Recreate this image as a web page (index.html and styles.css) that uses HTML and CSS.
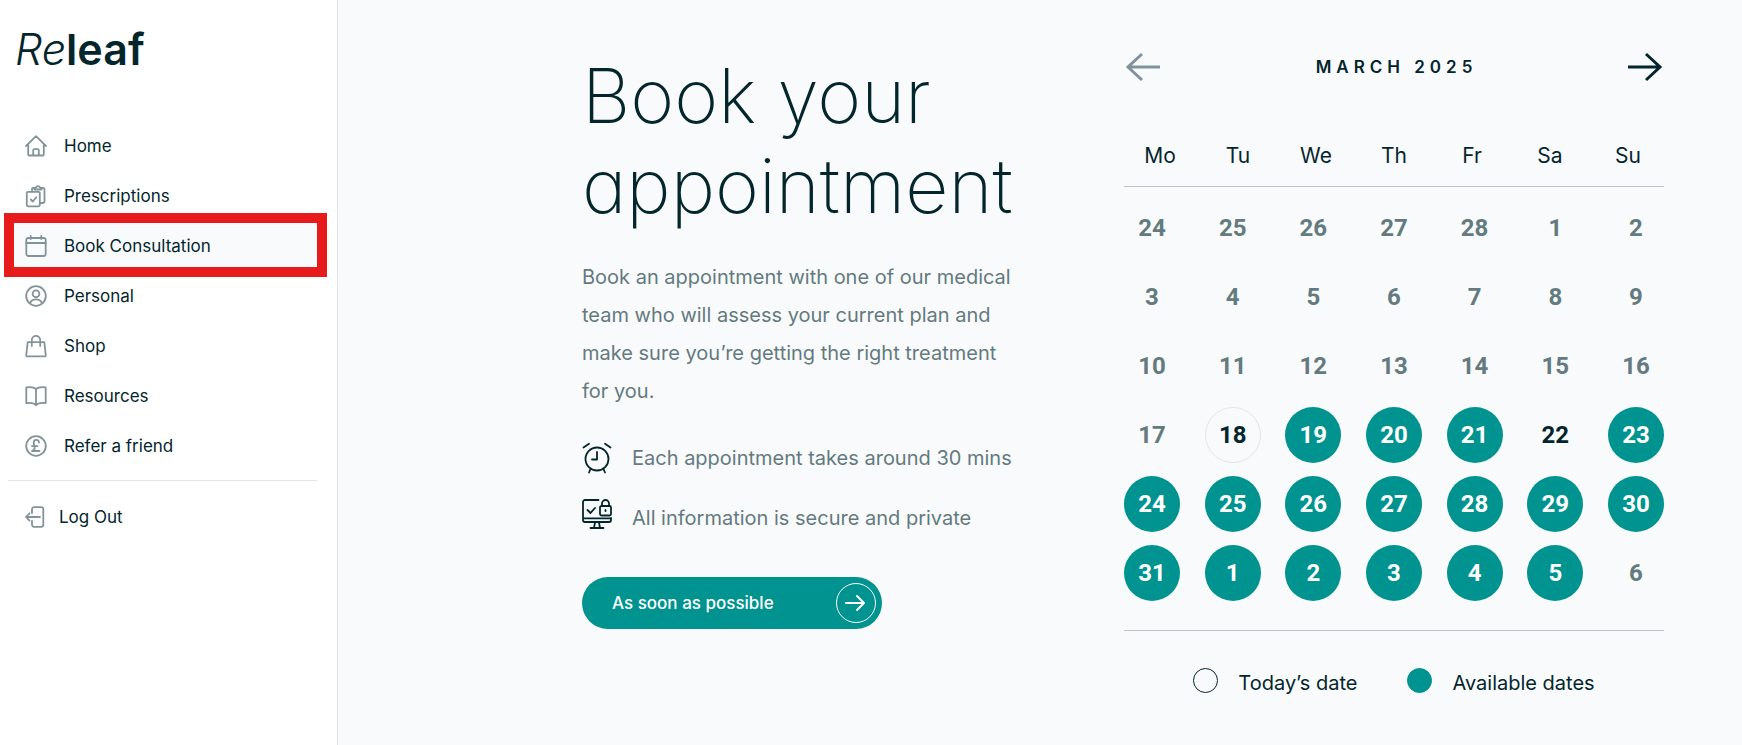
FILE: index.html
```html
<!DOCTYPE html>
<html lang="en">
<head>
<meta charset="UTF-8" />
<meta name="viewport" content="width=device-width, initial-scale=1" />
<title>Releaf - Book your appointment</title>
<link rel="stylesheet" href="styles.css">
</head>
<body>

<div class="layout">

  <!-- Sidebar -->
  <aside class="sidebar">
    <a href="#" class="logo"><em>Re</em><strong>leaf</strong></a>

    <nav class="menu" aria-label="Main">
      <a href="#" class="menu-item">
        <svg class="icon" viewBox="0 0 22 22"><path d="M1 11 11 1.2 21 11M3.2 9.5v10a1 1 0 0 0 1 1h13.6a1 1 0 0 0 1-1v-10M8.2 20.5v-5.300a1 1 0 0 1 1-1h3.600a1 1 0 0 1 1 1v5.300"/></svg>
        Home
      </a>
      <a href="#" class="menu-item">
        <svg class="icon" viewBox="0 0 22 22"><rect x="1.800" y="6.800" width="13" height="14.500" rx="1.200"/><path d="M5.800 14.500l2 2 3.500-4.300M7 6.500V4a1 1 0 0 1 1-1h1.500M16.500 3H18a1.500 1.500 0 0 1 1.500 1.500V16a2 2 0 0 1-2 2H15M9.500 4.500c0-2 1-1.700 1.700-2.200.6-1.700 3-1.700 3.600 0 .7.500 1.700.2 1.700 2.200z"/></svg>
        Prescriptions
      </a>
      <a href="#" class="menu-item active" aria-current="page">
        <svg class="icon" viewBox="0 0 22 22"><rect x="1.300" y="3" width="19.400" height="18" rx="2.200"/><path d="M1.300 8h19.400M5.700 .8V4M16.300 .8V4"/></svg>
        Book Consultation
      </a>
      <a href="#" class="menu-item">
        <svg class="icon" viewBox="0 0 22 22"><circle cx="11" cy="11" r="9.800"/><circle cx="11" cy="8.800" r="3.400"/><path d="M4.800 18.300c1.300-2.700 3.500-3.900 6.200-3.900s4.900 1.200 6.200 3.900"/></svg>
        Personal
      </a>
      <a href="#" class="menu-item">
        <svg class="icon" viewBox="0 0 22 22"><path d="M2.700 7.200h16.600l1.500 13.300a.8.8 0 0 1-.8.800H2a.8.8 0 0 1-.8-.8zM6.800 11V5a4.200 4.200 0 0 1 8.400 0v6"/></svg>
        Shop
      </a>
      <a href="#" class="menu-item">
        <svg class="icon" viewBox="0 0 22 22"><path d="M11 4.200C9 2 5 1.800 1.300 2.300v15.900c3.700-.5 7.700-.3 9.700 2 2-2.300 6-2.500 9.700-2V2.300C17 1.800 13 2 11 4.200zV20"/></svg>
        Resources
      </a>
      <a href="#" class="menu-item">
        <svg class="icon" viewBox="0 0 22 22"><circle cx="11" cy="11" r="9.800"/><path d="M14 7.500c0-3.500-5.300-3.500-5.300.2 0 2 1 3 1 5 0 1.700-1.200 2.600-2.700 3.300h7.500M7 11.200h5.500"/></svg>
        Refer a friend
      </a>
    </nav>

    <a href="#" class="menu-item logout">
      <svg class="icon" viewBox="0 0 22 22"><path d="M7 7V3.200a2 2 0 0 1 2-2h7.300a2 2 0 0 1 2 2v15.600a2 2 0 0 1-2 2H9a2 2 0 0 1-2-2V15M15 11H1M4.500 7.300 1 11l3.500 3.700"/></svg>
      Log Out
    </a>
  </aside>

  <!-- Booking -->
  <main class="booking">

    <section class="intro">
      <h1>Book your appointment</h1>
      <p>Book an appointment with one of our medical team who will assess your current plan and make sure you’re getting the right treatment for you.</p>

      <ul class="features">
        <li>
          <svg class="feature-icon" viewBox="0 0 30 30"><circle cx="15" cy="16" r="11.500"/><path d="M15 9v7.500h-5M1.500 4.500 7 .8M28.500 4.500 23 .8M8.500 26 7 29.500M21.500 26l1.500 3.500"/></svg>
          Each appointment takes around 30 mins
        </li>
        <li>
          <svg class="feature-icon raised" viewBox="0 0 30 30"><path d="M16.500 1H3a2 2 0 0 0-2 2v18a2 2 0 0 0 2 2h24a2 2 0 0 0 2-2v-2M1 19.300h28M13 23.500 12 29M17 23.500l1 5.500M8.500 29h13M5.500 11l3 3L13 9"/><rect x="18" y="7" width="11" height="9.500" rx="1.500"/><path d="M20 7V4.500a3.500 3.500 0 0 1 7 0V7M23.500 11v1"/></svg>
          All information is secure and private
        </li>
      </ul>

      <button type="button" class="asap-btn">
        As soon as possible
        <span class="asap-arrow">
          <svg viewBox="0 0 20 16"><path d="M0 8h18M11 1l7 7-7 7"/></svg>
        </span>
      </button>
    </section>

    <!-- Calendar -->
    <section class="calendar" aria-label="Calendar">
      <div class="calendar-header">
        <button type="button" class="month-btn" aria-label="Previous month" disabled>
          <svg viewBox="0 0 40 30"><path d="M36 15H4M18 2 4 15l14 13"/></svg>
        </button>
        <h2>March 2025</h2>
        <button type="button" class="month-btn" aria-label="Next month">
          <svg viewBox="0 0 40 30"><path d="M4 15h32M22 2l14 13-14 13"/></svg>
        </button>
      </div>

      <div class="weekdays">
        <span>Mo</span><span>Tu</span><span>We</span><span>Th</span><span>Fr</span><span>Sa</span><span>Su</span>
      </div>

      <div class="days" id="days"></div>

      <div class="legend">
        <span class="legend-item"><i class="dot"></i>Today’s date</span>
        <span class="legend-item"><i class="dot dot-available"></i>Available dates</span>
      </div>
    </section>

  </main>
</div>

<script>
  (() => {
    const days = document.getElementById('days');
    const today = new Date(2025, 2, 18);
    const lastBookable = new Date(2025, 3, 5);
    const fullyBooked = [22];

    // Six weeks, from Monday 24 February
    for (let i = 0; i < 42; i++) {
      const date = new Date(2025, 1, 24 + i);
      const day = document.createElement('button');
      day.type = 'button';
      day.className = 'day';
      day.textContent = date.getDate();

      if (date.getTime() === today.getTime()) {
        day.classList.add('today');
      } else if (date < today || date > lastBookable) {
        day.disabled = true;
      } else if (!(date.getMonth() === 2 && fullyBooked.includes(date.getDate()))) {
        day.classList.add('available');
      }
      days.appendChild(day);
    }
  })();
</script>

</body>
</html>
```

FILE: styles.css
```css
/* Reset & base */
*, *::before, *::after {
  box-sizing: border-box;
}
body {
  margin: 0;
  font-family: Inter, 'Open Sans', sans-serif;
  background: #f9fafc;
  color: #03262c;
}
h1, h2, p, ul {
  margin: 0;
  padding: 0;
}
button {
  font-family: inherit;
  color: inherit;
  background: none;
  border: none;
  padding: 0;
  cursor: pointer;
}
svg {
  display: block;
  flex-shrink: 0;
  fill: none;
  stroke: currentColor;
  stroke-linecap: round;
  stroke-linejoin: round;
  overflow: visible;
}

.layout {
  display: flex;
  min-height: 100vh;
}

/* Sidebar */
.sidebar {
  flex: 0 0 338px;
  padding: 24px 20px 24px 8px;
  background: #fff;
  border-right: 1px solid #e3e7ea;
}

.logo {
  display: block;
  margin-bottom: 47px;
  padding-left: 7px;
  font-size: 43px;
  line-height: 50px;
  color: inherit;
  text-decoration: none;
}
.logo em {
  font-weight: 300;
}
.logo strong {
  font-weight: 600;
}

.menu {
  padding-bottom: 9px;
  border-bottom: 1px solid #e3e5e7;
}

.menu-item {
  position: relative;
  display: flex;
  align-items: center;
  gap: 17px;
  height: 50px;
  padding-left: 17px;
  font-size: 17px;
  color: inherit;
  text-decoration: none;
}

.icon {
  width: 22px;
  height: 22px;
  color: #82949a;
  stroke-width: 1.8;
}

.menu-item.active {
  background: #f9fafc;
}
/* Highlight frame around the current item */
.menu-item.active::after {
  content: '';
  position: absolute;
  inset: -8px -10px -6px -4px;
  border: 10px solid #e71b1b;
  z-index: 1;
}

.logout {
  gap: 12px;
  margin-top: 11px;
}

/* Booking */
.booking {
  flex: 1;
  display: flex;
  justify-content: space-between;
  align-items: flex-start;
  gap: 40px;
  padding: 50px 78px 40px 244px;
}

.intro {
  flex: 0 1 440px;
}

.intro h1 {
  margin: 1px 0 27px;
  font-size: 75px;
  font-weight: 200;
  font-feature-settings: 'cv11';
  line-height: 90px;
}

.intro p {
  margin-bottom: 29px;
  font-size: 20px;
  line-height: 38px;
  color: #637a7e;
}

.features {
  list-style: none;
  display: flex;
  flex-direction: column;
  gap: 22px;
  margin-bottom: 40px;
  font-size: 20px;
  line-height: 38px;
  color: #637a7e;
}
.features li {
  display: flex;
  align-items: center;
  gap: 20px;
}
.feature-icon {
  width: 30px;
  height: 30px;
  color: #03262c;
  stroke-width: 1.8;
}
.feature-icon.raised {
  align-self: flex-start;
}

.asap-btn {
  display: flex;
  align-items: center;
  justify-content: space-between;
  width: 300px;
  height: 52px;
  padding: 0 6px 0 30px;
  border-radius: 26px;
  background: #00938f;
  color: #fff;
  font-size: 17px;
  font-weight: 500;
}
.asap-arrow {
  display: grid;
  place-items: center;
  width: 40px;
  height: 40px;
  border: 1px solid #fff;
  border-radius: 50%;
}
.asap-arrow svg {
  width: 20px;
  height: 16px;
  stroke-width: 2;
}

/* Calendar */
.calendar {
  flex: 0 0 540px;
  min-width: 0;
}

.calendar-header {
  display: flex;
  align-items: center;
  justify-content: space-between;
  height: 34px;
}
.calendar-header h2 {
  padding-left: 5px;
  font-size: 17px;
  font-weight: 600;
  letter-spacing: 5px;
  text-transform: uppercase;
}
.month-btn svg {
  width: 40px;
  height: 30px;
  stroke-width: 3;
  stroke-linecap: butt;
  stroke-linejoin: miter;
}
.month-btn:disabled {
  color: #80939a;
}

.weekdays {
  display: grid;
  grid-template-columns: repeat(7, 78px);
  justify-content: center;
  margin-top: 56px;
  padding-bottom: 14px;
  border-bottom: 1px solid #bcc4c7;
  font-size: 21px;
  line-height: 32px;
  text-align: center;
}

.days {
  display: grid;
  grid-template-columns: repeat(7, 56px);
  justify-content: space-between;
  row-gap: 13px;
  padding: 13px 0 29px;
  border-bottom: 1px solid #bcc4c7;
}
.day {
  height: 56px;
  border-radius: 50%;
  font-family: Roboto, sans-serif;
  font-size: 24px;
  font-weight: 700;
}
.day:disabled {
  color: #637a7e;
}
.day.today {
  border: 1px solid #e3e6e8;
}
.day.available {
  background: #00938f;
  color: #fff;
}

/* Legend */
.legend {
  display: flex;
  justify-content: center;
  gap: 50px;
  margin-top: 35px;
  font-size: 20px;
  line-height: 34px;
}
.legend-item {
  display: flex;
  gap: 20px;
}
.dot {
  width: 25px;
  height: 25px;
  margin-top: 2px;
  border: 1px solid #03262c;
  border-radius: 50%;
}
.dot-available {
  background: #00938f;
  border-color: #00938f;
}

/* Responsive */
@media (max-width: 1500px) {
  .booking {
    padding-left: 60px;
    padding-right: 40px;
  }
}
@media (max-width: 1200px) {
  .booking {
    flex-direction: column;
  }
}
```
